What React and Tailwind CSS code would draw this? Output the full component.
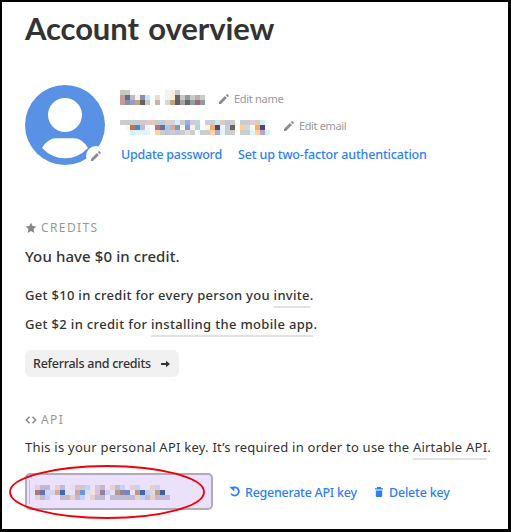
const NAME = [
  "cdc5b7 bfcccd - - - - - - - e6f8ff ffeddc c8cbcb - - - - -",
  "c59a9a 59717e bcbad0 ffefdf 8790ac c5e8ff - efdccb - e6f8ff ffecd8 666666 c8caca 929a9a c9cbcb bdb0a8 cccccc",
  "c59a9a 8b8fa3 9c9acb c4a67b 666060 c1ccd0 - c4b7a7 - cddce1 c4a67b 5f5d5d a5a5a5 666666 999f9c 946b82 999999",
];
const EMAIL = [
  "cccccc cccccc cccccc c0cbdc cccccc e0c6cf e0ccb9 cccccc bfcce0 e0cfc4 e0ccdf d0efff cccccc 99afdb ccccdf bcd9e0 ffffff ccccdf cccccc cce7f5 e0ccb9 bdc5e0 cccccc ffffff cccccc cccccc dfccdf e0ccb9 d0efff ffffff",
  "ffffff fff9dc bf7350 4488c8 b6bbef fff1e2 ffffff b37381 736b94 90cfff e0a995 819da5 f3ffff 829bd8 fff1d3 b2d5dd f3ffff fff5d5 ebb36b 594079 e0f8ff cccccc 666666 ffffff ffcf91 bfdcf9 fff9dc ebb36b 594079 f3ffff",
  "ffffff ffffff d0efff e0f4ff e0f4ff ddf7ff ffffff ffd1a4 cccccc bdc6e0 cccccc bdc6e0 cccccc d9e0dc cccccc f3ffff cccccc cccccc ffd1a4 bba6ca e0f4ff cccccc cccccc ffffff cccccc cccccc e0f4ff ffd1a4 bba6ca d0efff",
];
const KEY = [
  "ead0ca c1bace c1bace ece1fc e9cfca c1bad0 ece1fc eadbe4 d7c3d3 d7c3d3 c3d2fb ece1fc dcc6d6 c1b8d0 ece1fc e9cfca c1bad0 c4d2fb ece1fc e9cfca c4d2fb ece1fc ece1fc ead0ca c4d2fb ece1fc ece1fc",
  "a57e79 6970b0 c2dcff dcd1e8 d1ac99 4267b4 d9e3fb ece1fc d1a49c 6999db d7e0fb efe2df d4bfdc 93819f c4d2fb e2e0fa b89984 8d839a 6b89c8 ece1fc bc9c7c 4267b4 c4d2fb ddd9e8 c29d7a 405d99 dfe1fc",
  "ead0ca c1bad0 c3cefb ece1fc ece1fc c1bad0 c1bad0 e9cfca c1bad0 c3d2fb ece1fc e9cfca c1bad0 c1bad0 ece1fc c1bad0 c1bad0 c1bad0 c1bad0 c1bad0 e9cfca c4cefb c1bad0 e9cfca c1bad0 c1bad0 c1bad0",
];

function Mosaic({ rows }) {
  return (
    <div className="shrink-0">
      {rows.map((row, y) => (
        <div key={y} className="flex h-[5px]">
          {row.split(" ").map((c, x) => (
            <i key={x} className="size-[5px]" style={{ background: c === "-" ? "transparent" : "#" + c }} />
          ))}
        </div>
      ))}
    </div>
  );
}

function Pencil() {
  return (
    <svg className="size-[10px] shrink-0" viewBox="0 0 10 10" fill="#8c8c8c">
      <path d="M0 10V8L5.9 2.1 7.9 4.1l-5.9 5.9zM6.8 1.2L7.7.3q.4-.4.8 0l1.2 1.2q.4.4 0 .8L8.8 3.2z" />
    </svg>
  );
}

function Underlined({ children }) {
  return <span className="inline-block h-[25px] border-b-2 border-[#e1e1e1]">{children}</span>;
}

export default function App() {
  return (
    <main className="relative h-[532px] w-[511px] overflow-hidden border-t-2 border-r-[3px] border-b-[3px] border-l-2 border-black bg-white pl-[23px] font-['Noto_Sans',sans-serif] text-[13px] whitespace-nowrap text-[#333]">
      <h1 className="mt-[5px] h-[42px] font-['Lato',sans-serif] text-[31px] leading-[42px] font-bold tracking-[-0.1px] [word-spacing:2px]">Account overview</h1>

      <section className="mt-[36px] flex h-20">
        <div className="relative mr-[15px] size-20 shrink-0">
          <svg viewBox="0 0 80 80" className="size-20">
            <circle cx="40" cy="40" r="40" fill="#5991e5" />
            <circle cx="40" cy="30" r="17" fill="white" />
            <path d="M17 63Q23 53.3 31 53.3H49Q57 53.3 63 63Q53 73.3 40 73.3T17 63Z" fill="white" />
          </svg>
          <div className="absolute top-[61px] left-[61px] flex size-5 items-center justify-center rounded-full bg-white">
            <Pencil />
          </div>
        </div>
        <div>
          <div className="mt-[5px] flex h-[15px] items-center">
            <Mosaic rows={NAME} />
            <div className="mt-[3px] ml-[14px] flex items-center gap-[5px] text-[11px] text-[#999]">
              <Pencil /><span className="tracking-[-0.3px]">Edit name</span>
            </div>
          </div>
          <div className="mt-[15px] flex h-[15px] items-center">
            <Mosaic rows={EMAIL} />
            <div className="-mt-[3px] ml-[14px] flex items-center gap-[5px] text-[11px] text-[#999]">
              <Pencil /><span className="tracking-[-0.38px]">Edit email</span>
            </div>
          </div>
          <div className="mt-[10px] ml-px flex h-5 gap-4 leading-5 font-medium text-[#2d7ff9]">
            <a className="w-[101px] text-[12.5px] tracking-[-0.25px]">Update password</a>
            <a className="text-[12.5px] tracking-[-0.16px]">Set up two-factor authentication</a>
          </div>
        </div>
      </section>

      <section className="mt-[54px]">
        <h2 className="flex h-[18px] items-center gap-1 text-[12px] leading-[18px] tracking-[1.4px] text-[#999]">
          <svg className="size-3" viewBox="0 0 12 12" fill="#888"><path d="M6 .6L7.6 4l3.8.4-2.8 2.7.7 3.9L6 9.1 2.7 11l.7-3.9L.6 4.4 4.4 4z" /></svg>
          CREDITS
        </h2>
        <p className="mt-[7px] h-6 text-[15px] leading-6 font-medium tracking-[0.1px]">You have $0 in credit.</p>
        <p className="mt-[15px] h-6 leading-6 font-medium tracking-[0.3px]">Get $10 in credit for every person you <Underlined>invite</Underlined>.</p>
        <p className="mt-[5px] h-6 leading-6 font-medium tracking-[0.33px]">Get $2 in credit for <Underlined>installing the mobile app</Underlined>.</p>
        <button className="mt-[14px] flex h-[27px] w-[154px] items-center justify-between rounded-[6px] bg-[#f1f1f1] pr-[9px] pl-2 text-[12.5px] font-medium">
          <span className="mt-[2px] tracking-[-0.26px]">Referrals and credits</span>
          <svg className="h-[8px] w-[9px]" viewBox="0 0 9 8" fill="#333"><path d="M0 3h5V.8L9 4 5 7.2V5H0z" /></svg>
        </button>
      </section>

      <section className="mt-[34px]">
        <h2 className="flex h-[18px] items-center gap-1 text-[12px] leading-[18px] tracking-[1.4px] text-[#999]">
          <svg className="h-[8px] w-[12px]" viewBox="0 0 12 8" fill="none" stroke="#888" strokeWidth="1.5"><path d="M4.5.8L1.3 4l3.2 3.2M7.5.8L10.7 4 7.5 7.2" /></svg>
          API
        </h2>
        <p className="mt-[6px] h-6 leading-6 tracking-[0.23px]">This is your personal API key. It’s required in order to use the <Underlined>Airtable API</Underlined>.</p>
        <div className="mt-[14px] flex h-[37px] items-center">
          <div className="relative flex h-[37px] w-[188px] items-center rounded-[5px] border-2 border-[#b2a8bf] bg-[#ece1fc]">
            <i className="mr-[5px] ml-[2px] h-[24px] w-px bg-[#c8bdd5]" />
            <div className="mt-[2px]"><Mosaic rows={KEY} /></div>
            <svg className="absolute top-[-11px] left-[-19px] h-[56px] w-[200px]" viewBox="0 0 200 56" fill="none">
              <ellipse cx="99" cy="28" rx="97" ry="26" stroke="#f00006" strokeWidth="1.8" />
            </svg>
          </div>
          <a className="mt-[3px] ml-4 flex w-[129px] items-center gap-[5px] text-[12.5px] font-medium text-[#2d7ff9]">
            <svg className="-mt-[3px] size-[11px] shrink-0" viewBox="0 0 11 11"><path d="M3.5 2A4.1 4.1 0 1 1 2.2 7.6" fill="none" stroke="#2d7ff9" strokeWidth="1.8" /><path d="M.3.8H5.3V5.8z" fill="#2d7ff9" /></svg>
            <span className="tracking-[-0.26px]">Regenerate API key</span>
          </a>
          <a className="mt-[3px] ml-[17px] flex items-center gap-[6px] text-[12.5px] font-medium text-[#2d7ff9]">
            <svg className="-mt-[3px] h-[10px] w-2" viewBox="0 0 8 10" fill="#2d7ff9"><path d="M2 0h4v1.2h2v1.2H0V1.2h2zM.8 3.5h6.4V9q0 1-1 1H1.8q-1 0-1-1z" /></svg>
            <span className="tracking-[-0.2px]">Delete key</span>
          </a>
        </div>
      </section>
    </main>
  );
}
